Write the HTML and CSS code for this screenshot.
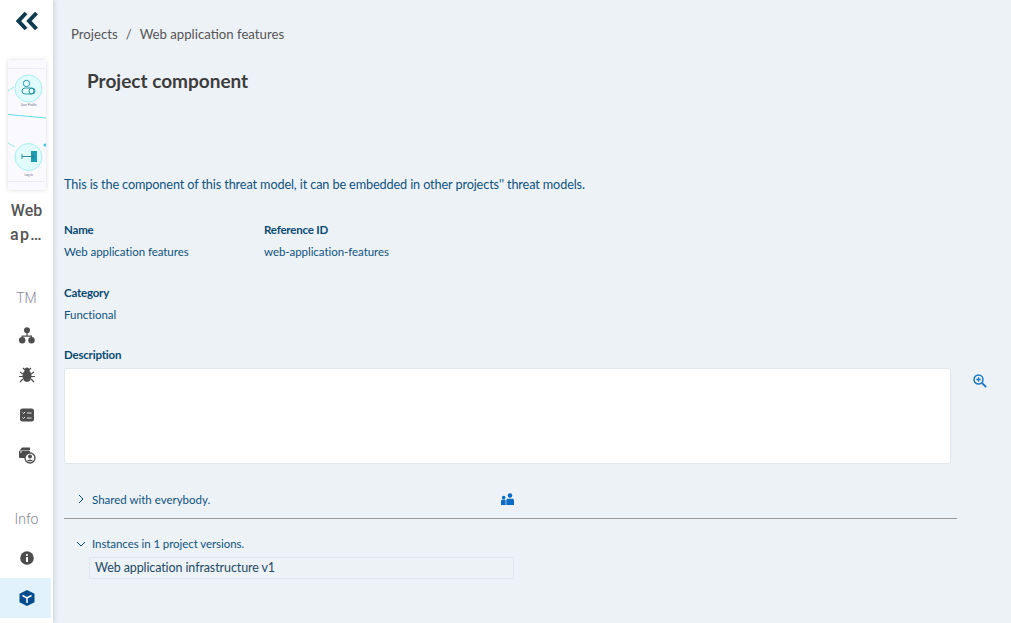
FILE: index.html
```html
<!DOCTYPE html>
<html lang="en">
<head>
<meta charset="utf-8">
<title>Project component</title>
<link rel="stylesheet" href="styles.css">
</head>
<body>
<div class="app">
  <nav class="sidebar">
    <div class="collapse">
      <svg width="24" height="20" viewBox="0 0 24 20"><path d="M11 2 3.500 10 11 18M21.500 2 14 10l7.500 8" fill="none" stroke="#0e3a4f" stroke-width="4"/></svg>
    </div>
    <div class="thumb">
      <svg width="38" height="130" viewBox="0 0 38 130">
        <rect width="38" height="130" fill="#faf9ff"/>
        <path d="M0 8.500H38M0 121.500H38" stroke="#d9d4f2" stroke-width=".7" stroke-dasharray="1.500 1"/>
        <path d="M0 54.500 38 58" stroke="#5fdcea" stroke-width="1"/>
        <path d="M0 31 6 27M0 83 7 87" stroke="#7fdfea" stroke-width=".8"/>
        <circle cx="37" cy="85" r="1.500" fill="#3fc8dc"/>
        <circle cx="20.500" cy="28.500" r="13.500" fill="#e0fcfc" stroke="#a8eef2"/>
        <circle cx="18.500" cy="23.500" r="3.200" fill="none" stroke="#1f8ca0" stroke-width=".9"/>
        <rect x="14" y="28" width="12" height="6" rx="3" fill="none" stroke="#1f8ca0" stroke-width=".9"/>
        <circle cx="24" cy="31" r="3" fill="none" stroke="#1f8ca0" stroke-width=".9"/>
        <text class="thumb-label" x="20.500" y="46">User Profile</text>
        <circle cx="20.500" cy="97" r="13.500" fill="#e0fcfc" stroke="#a8eef2"/>
        <rect x="23" y="91" width="6" height="11" fill="#1f9db0"/>
        <path d="M14 96.500H26M23.500 94l2.500 2.500-2.500 2.500M14 94v5" stroke="#1f7f92" stroke-width=".9" fill="none"/>
        <text class="thumb-label" x="20.500" y="116">Log in</text>
      </svg>
    </div>
    <div class="project-name">Web <span class="name-tail">ap…</span></div>
    <div class="nav-group nav-tm">
      <div class="nav-title">TM</div>
      <div class="nav-item">
        <svg width="16" height="18" viewBox="0 0 16 18"><circle cx="8" cy="4.200" r="3" fill="#4d4d4d"/><circle cx="3.200" cy="14.200" r="3.200" fill="#4d4d4d"/><circle cx="12.500" cy="14.200" r="3.200" fill="#4d4d4d"/><path d="M8 6v4.200M3.200 13v-2.800h9.300V13" fill="none" stroke="#4d4d4d" stroke-width="1.200"/></svg>
      </div>
      <div class="nav-item">
        <svg width="16" height="18" viewBox="0 0 16 18"><ellipse cx="8" cy="10" rx="4.500" ry="6" fill="#4d4d4d"/><circle cx="8" cy="4" r="2.500" fill="#4d4d4d"/><path d="M4 2 6 4M12 2l-2 2M1 6l3 2M15 6l-3 2M0 10.500h4M16 10.500h-4M1 16l3-3M15 16l-3-3" stroke="#4d4d4d" stroke-width="1.200" fill="none"/></svg>
      </div>
      <div class="nav-item">
        <svg width="16" height="18" viewBox="0 0 16 18"><rect x="1" y="2.500" width="14" height="13" rx="2.500" fill="#4d4d4d"/><path d="M3.500 6.500l1 1 1.500-1.500M3.500 11.500l1 1 1.500-1.500M8 7h4.500M8 12h4.500" stroke="#fff" stroke-width=".9" fill="none"/></svg>
      </div>
      <div class="nav-item">
        <svg width="18" height="18" viewBox="0 0 18 18"><path d="M2 4 4 1.500h8V4z" fill="#4d4d4d"/><rect x="1" y="4.500" width="11" height="7.500" rx="1" fill="#4d4d4d"/><path d="M2 6h2" stroke="#fff" stroke-width=".9"/><circle cx="12" cy="12" r="5" fill="#fff" stroke="#4d4d4d" stroke-width="1.300"/><circle cx="12" cy="10.500" r="2" fill="#4d4d4d"/><path d="M8.800 15.200a3.500 3 0 0 1 6.400 0z" fill="#4d4d4d"/></svg>
      </div>
    </div>
    <div class="nav-group nav-info">
      <div class="nav-title">Info</div>
      <div class="nav-item">
        <svg width="14" height="14" viewBox="0 0 14 14"><circle cx="7" cy="7" r="6.800" fill="#4d4d4d"/><rect x="6" y="6" width="2" height="5" fill="#fff"/><circle cx="7" cy="4" r="1.100" fill="#fff"/></svg>
      </div>
      <div class="nav-item active">
        <svg width="16" height="18" viewBox="0 0 16 18"><path d="M8 1 15.500 4.800v8.400L8 17 .5 13.200V4.800z" fill="#004c8c"/><path d="M3.500 6.500 8 9l4.500-2.500M8 9v5" fill="none" stroke="#fff" stroke-width="1.500"/></svg>
      </div>
    </div>
  </nav>

  <main class="content">
    <div class="breadcrumb"><span>Projects</span><span class="sep">/</span><span>Web application features</span></div>
    <h1 class="page-title">Project component</h1>
    <p class="intro">This is the component of this threat model, it can be embedded in other projects'' threat models.</p>
    <div class="field-row">
      <div class="field field-name"><div class="label">Name</div><div class="value">Web application features</div></div>
      <div class="field"><div class="label">Reference ID</div><div class="value">web-application-features</div></div>
    </div>
    <div class="field-row">
      <div class="field"><div class="label">Category</div><div class="value">Functional</div></div>
    </div>
    <div class="label label-desc">Description</div>
    <div class="desc-row">
      <div class="desc-box"></div>
      <svg class="zoom-icon" width="14" height="14" viewBox="0 0 14 14"><circle cx="5.500" cy="5.500" r="4.500" fill="none" stroke="#1976c5" stroke-width="1.500"/><path d="M3.300 5.500h4.400M5.500 3.300v4.400" stroke="#1976c5" stroke-width="1.300"/><path d="M9 9l4.200 4.200" stroke="#1976c5" stroke-width="1.800"/></svg>
    </div>
    <div class="shared-row">
      <svg class="chev chev-right" width="8" height="10" viewBox="0 0 8 10"><path d="M2 1l4 4-4 4" fill="none" stroke="#0a4a7a" stroke-width="1"/></svg>
      <span class="small shared-text">Shared with everybody.</span>
      <svg class="people" width="13" height="12" viewBox="0 0 13 12"><circle cx="2.700" cy="4.500" r="1.800" fill="#0a6cc4"/><path d="M0 12V7.500l1-1h2.700l1 1V12z" fill="#0a6cc4"/><circle cx="9" cy="2.500" r="2.300" fill="#0a6cc4"/><path d="M5.300 12V6.800l1-1h5.700l1 1V12z" fill="#0a6cc4"/></svg>
    </div>
    <div class="instances-row">
      <svg class="chev" width="10" height="8" viewBox="0 0 10 8"><path d="M1 2l4 4 4-4" fill="none" stroke="#0a4a7a" stroke-width="1"/></svg>
      <span class="small instances-text">Instances in 1 project versions.</span>
    </div>
    <div class="instance-box">Web application infrastructure v1</div>
  </main>
</div>
</body>
</html>
```
FILE: styles.css
```css
* { box-sizing: border-box; }
html, body { margin: 0; height: 100%; }
body {
  background: #edf2f7;
  font-family: "Lato", sans-serif;
  color: #0f5280;
  overflow: hidden;
}
.app { display: flex; height: 623px; }
.sidebar {
  width: 53px;
  flex: none;
  background: #fff;
  box-shadow: 1px 0 5px rgba(90, 110, 130, .25);
  display: flex;
  flex-direction: column;
  align-items: center;
}
.collapse { height: 60px; padding-top: 11px; }
.collapse svg { display: block; }
.thumb {
  width: 38px;
  height: 130px;
  border-radius: 2px;
  overflow: hidden;
  box-shadow: 0 0 4px rgba(0, 0, 0, .15);
}
.thumb svg { display: block; }
.thumb-label {
  font: 3px "Liberation Sans", sans-serif;
  fill: #667;
  text-anchor: middle;
}
.project-name {
  width: 40px;
  margin-top: 9px;
  height: 46px;
  text-align: center;
  font: 500 16px/24px "Roboto", sans-serif;
  color: #555;
}
.name-tail { letter-spacing: 1.300px; white-space: nowrap; }
.nav-group { width: 100%; display: flex; flex-direction: column; }
.nav-tm { margin-top: 41px; }
.nav-info { margin-top: 32px; }
.nav-title {
  height: 24px;
  text-align: center;
  font: 300 14px/24px "Roboto", sans-serif;
  color: #8a8a98;
}
.nav-tm .nav-title { margin-bottom: 5px; }
.nav-info .nav-title { margin-bottom: 7px; }
.nav-item {
  height: 40px;
  width: 51px;
  padding-left: 3px;
  display: flex;
  align-items: center;
  justify-content: center;
}
.nav-item.active { background: #e1f2fd; }
.content { flex: 1; padding: 0 0 0 11px; min-width: 0; }
.breadcrumb {
  display: flex;
  margin: 25px 0 0 7px;
  font-size: 13.200px;
  line-height: 18px;
  color: #555;
}
.sep { margin: 0 8px; }
.page-title {
  margin: 24px 0 0 23px;
  font-size: 19px;
  line-height: 28px;
  font-weight: 700;
  color: #3d3d3d;
}
.intro { margin: 80px 0 0; font-size: 12.700px; letter-spacing: -.125px; line-height: 18px; }
.field-row { display: flex; margin-top: 28px; }
.field-row + .field-row { margin-top: 23px; }
.field-name { width: 200px; }
.label { font-size: 11.500px; letter-spacing: -.2px; line-height: 18px; font-weight: 700; color: #0a4a72; }
.value { font-size: 11.500px; letter-spacing: -.05px; line-height: 18px; margin-top: 4px; }
.label-desc { margin-top: 22px; }
.desc-row { display: flex; align-items: flex-start; margin-top: 4px; }
.desc-box {
  flex: none;
  width: 887px;
  height: 96px;
  background: #fff;
  border: 1px solid #e2e7ec;
  border-radius: 2px;
}
.zoom-icon { margin: 6px 0 0 22px; }
.shared-row {
  display: flex;
  align-items: center;
  width: 893px;
  height: 55px;
  padding: 18px 0 0 13px;
  border-bottom: 1px solid #999;
}
.chev-right { margin-top: -2px; }
.people { margin-top: -2px; }
.small { font-size: 11.500px; line-height: 16px; margin-left: 7px; }
.shared-text { width: 409px; }
.instances-text { margin-left: 6px; letter-spacing: -.07px; }
.instances-row {
  display: flex;
  align-items: center;
  padding: 17px 0 0 12px;
}
.instance-box {
  width: 425px;
  height: 22px;
  margin: 5px 0 0 25px;
  padding-left: 5px;
  border: 1px solid #e0e6ec;
  font-size: 12.500px;
  letter-spacing: -.1px;
  line-height: 19px;
  color: #234a66;
}
```
